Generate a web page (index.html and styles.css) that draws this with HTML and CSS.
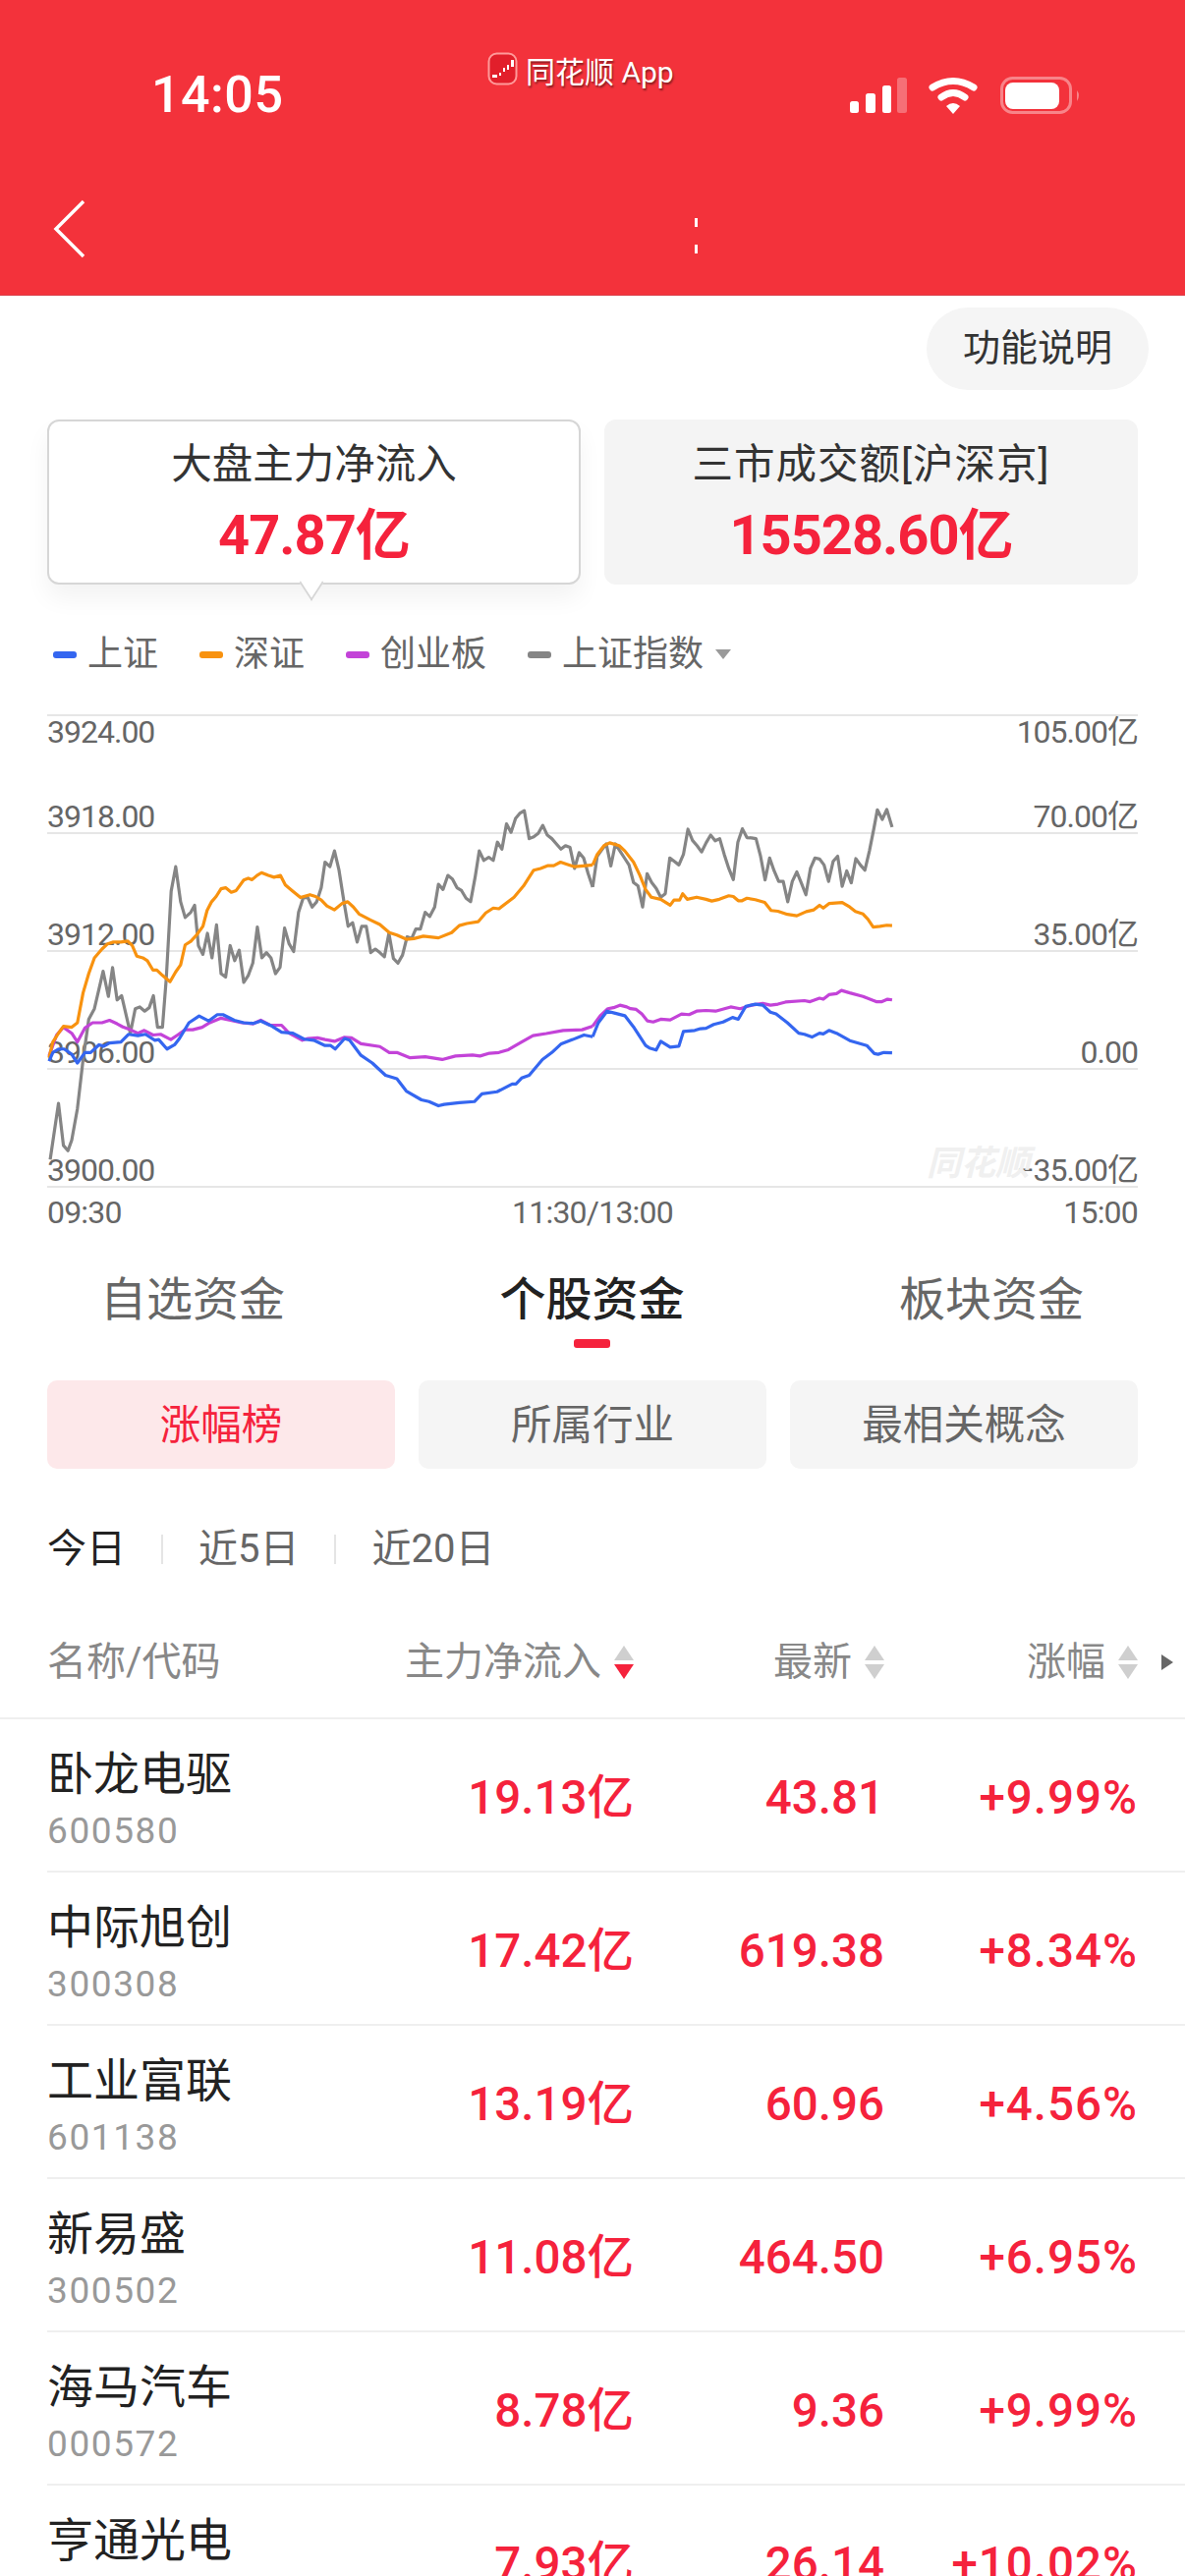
FILE: index.html
```html
<!DOCTYPE html>
<html lang="zh-CN">
<head>
    <meta charset="UTF-8">
    <meta name="viewport" content="width=device-width, initial-scale=1.0">
    <title>资金流向</title>
    <link rel="stylesheet" href="styles.css">
</head>
<body>
<div class="page">
    <header class="app-header">
        <div class="status-bar">
            <span class="status-time">14:05</span>
            <div class="status-app">
                <svg class="app-logo" viewBox="0 0 31 34">
                    <rect x="1.5" y="1.5" width="28" height="31" rx="8" fill="#e21f2b" stroke="#ff9a9a" stroke-width="2"/>
                    <path d="M5 23h5v3H5zM12 21h2v3h-2zM16 16h2v4h-2zM20 13h2v5h-2zM24 8h3v7h-3z" fill="#fff"/>
                </svg>
                <span class="app-name">同花顺 App</span>
            </div>
            <svg class="status-icons" viewBox="0 0 235 40">
                <rect x="0" y="25" width="9" height="12" rx="2.5" fill="#fff"/>
                <rect x="16" y="17" width="10" height="20" rx="2.5" fill="#fff"/>
                <rect x="33" y="9" width="9" height="28" rx="2.5" fill="#fff"/>
                <rect x="48" y="1" width="10" height="36" rx="2.5" fill="#fff" fill-opacity="0.3"/>
                <path d="M84 11Q105 -2 126 11" fill="none" stroke="#fff" stroke-width="7" stroke-linecap="round"/>
                <path d="M93 21Q105 12 117 21" fill="none" stroke="#fff" stroke-width="7" stroke-linecap="round"/>
                <path d="M98 30Q105 24 112 30L105 38Z" fill="#fff"/>
                <rect x="154.5" y="1.5" width="70" height="35" rx="11" fill="none" stroke="#fff" stroke-opacity="0.4" stroke-width="3"/>
                <rect x="158" y="6" width="55" height="27" rx="8" fill="#fff"/>
                <path d="M231 14Q235 19 231 25Z" fill="#fff" fill-opacity="0.4"/>
            </svg>
        </div>
        <div class="nav-bar">
            <svg class="nav-back" viewBox="0 0 34 60">
                <path d="M32 2L4 30L32 58" fill="none" stroke="#fff" stroke-width="3.5"/>
            </svg>
            <div class="nav-marks"><i></i><i></i></div>
        </div>
    </header>

    <div class="top-action">
        <span class="help-btn">功能说明</span>
    </div>

    <section class="summary">
        <div class="summary-card summary-card-active">
            <div class="summary-title">大盘主力净流入</div>
            <div class="summary-value">47.87亿</div>
        </div>
        <div class="summary-card">
            <div class="summary-title summary-title-wide">三市成交额[沪深京]</div>
            <div class="summary-value">15528.60亿</div>
        </div>
    </section>

    <div class="legend">
        <span class="legend-item"><i class="dash dash-blue"></i>上证</span>
        <span class="legend-item"><i class="dash dash-orange"></i>深证</span>
        <span class="legend-item"><i class="dash dash-purple"></i>创业板</span>
        <span class="legend-item"><i class="dash dash-gray"></i>上证指数<i class="caret"></i></span>
    </div>

    <section class="chart">
        <div class="axis-row axis-row-top"><span>3924.00</span><span>105.00亿</span></div>
        <div class="axis-row axis-row-first"><span>3918.00</span><span>70.00亿</span></div>
        <div class="axis-row"><span>3912.00</span><span>35.00亿</span></div>
        <div class="axis-row"><span>3906.00</span><span>0.00</span></div>
        <div class="axis-row"><span>3900.00</span><span>−35.00亿</span></div>
        <span class="watermark">同花顺</span>
        <svg class="chart-lines" viewBox="125 78 2885 1345" preserveAspectRatio="none">
            <g>
                <polyline class="line-gray" points="133,1345 155,1185 168,1305 180,1320 190,1290 205,1200 220,1060 235,945 250,915 273,808 287,880 298,798 310,890 322,878 345,985 358,915 370,910 383,922 395,912 406,878 417,968 430,968 440,830 453,580 465,510 478,610 490,655 505,640 515,620 525,735 537,760 549,700 561,770 573,676 585,815 597,825 609,735 621,778 633,748 645,840 657,820 669,785 681,682 693,770 705,755 717,770 729,815 741,797 753,685 765,730 777,752 790,640 802,600 814,597 826,625 838,610 850,570 860,497 873,510 885,465 897,520 910,610 921,680 933,670 945,725 957,680 969,680 981,755 993,745 1005,755 1017,767 1029,700 1041,772 1053,785 1065,762 1077,710 1089,715 1100,688 1112,688 1125,640 1137,652 1150,625 1160,560 1172,575 1185,535 1197,545 1209,570 1221,578 1233,600 1245,610 1257,540 1268,465 1280,492 1293,483 1305,492 1316,440 1328,460 1340,388 1352,412 1364,372 1375,358 1387,350 1400,430 1412,425 1424,415 1436,392 1448,420 1460,430 1472,445 1484,460 1496,450 1508,455 1520,515 1532,470 1544,485 1556,530 1568,568"/>
                <polyline class="line-purple" points="130,1050 150,990 168,968 190,985 205,1010 225,970 245,955 270,955 290,948 310,958 325,967 345,975 365,985 382,977 405,990 425,988 452,1003 470,990 490,975 510,975 535,968 555,955 585,942 610,948 640,955 670,958 690,948 715,962 745,962 765,985 800,1005 815,1000 840,998 860,1003 885,1008 910,997 930,998 955,1015 1005,1023 1030,1040 1050,1040 1085,1055 1125,1052 1170,1060 1205,1050 1250,1047 1270,1050 1295,1042 1320,1040 1345,1032 1380,1010 1410,992 1445,986 1490,977 1540,975 1568,965"/>
                <polyline class="line-orange" points="130,1055 140,1010 155,985 168,965 190,968 205,955 220,870 235,815 250,770 270,745 285,730 300,725 320,725 338,722 350,735 362,765 378,770 390,778 405,805 415,805 430,820 450,838 465,810 478,790 490,733 505,723 520,705 537,680 548,635 560,610 572,595 585,573 597,570 612,583 625,578 645,548 657,543 667,547 680,535 692,527 710,535 725,540 742,535 755,562 775,580 795,598 820,590 835,595 850,605 865,622 885,633 905,615 920,610 935,625 950,645 980,662 1005,675 1030,698 1050,705 1075,717 1095,715 1120,708 1160,713 1195,698 1215,678 1235,672 1265,667 1285,642 1305,628 1320,630 1360,597 1385,565 1412,520 1430,515 1450,507 1465,507 1483,497 1500,503 1520,510 1550,507 1568,505"/>
                <polyline class="line-blue" points="130,1065 140,1040 155,1030 170,1030 190,1045 205,1070 225,1040 240,1040 262,1018 275,1022 290,1013 320,1010 340,988 365,992 385,988 410,1005 420,1003 442,1030 462,1018 475,1000 500,955 527,936 552,950 575,932 590,932 620,948 645,955 670,957 690,950 720,965 745,982 775,985 805,1002 830,1005 860,1020 875,1020 887,1030 912,1000 925,1005 955,1048 985,1070 1020,1105 1050,1115 1075,1150 1115,1175 1135,1180 1160,1192 1175,1188 1215,1183 1255,1180 1275,1158 1315,1152 1355,1130 1365,1130 1380,1113 1400,1105 1435,1060 1460,1040 1485,1015 1515,1003 1545,990 1568,995"/>
            </g>
            <g transform="translate(1568 0)">
                <polyline class="line-gray" points="0,568 12,480 24,462 36,445 48,508 60,445 72,465 84,485 96,505 108,555 120,565 132,625 144,530 156,555 168,572 180,597 192,587 204,485 216,495 228,505 240,475 252,403 264,435 276,450 288,468 300,442 312,420 324,436 336,430 348,475 360,515 372,547 384,440 396,402 408,427 420,428 432,430 444,480 456,548 468,485 480,522 492,552 504,552 516,610 528,552 540,525 552,557 564,590 576,515 588,485 600,488 612,505 624,552 636,495 648,480 660,566 672,522 684,556 696,487 708,505 720,520 732,465 744,400 753,348 766,375 778,347 792,397"/>
                <polyline class="line-purple" points="0,965 20,935 40,915 55,912 72,905 90,910 100,915 115,917 130,930 145,950 160,953 180,945 205,947 235,930 255,932 275,922 300,920 325,922 365,910 390,915 420,905 450,900 470,905 490,902 510,896 560,892 575,895 600,885 610,888 625,875 645,872 658,863 680,870 715,880 750,895 765,895 780,888 792,890"/>
                <polyline class="line-orange" points="0,505 12,475 30,450 45,442 70,450 85,465 108,497 125,535 140,575 155,597 180,603 205,620 215,605 230,605 238,587 250,603 275,597 300,603 315,608 335,603 360,593 372,595 385,607 395,607 408,600 430,604 455,612 472,635 490,637 515,646 540,650 565,638 585,633 600,620 610,628 625,615 660,612 680,625 695,638 715,645 728,660 742,682 760,680 778,677 792,678"/>
                <polyline class="line-blue" points="0,995 15,955 38,922 60,928 85,935 110,970 140,1020 150,1027 168,1033 180,1008 205,1025 228,1022 240,980 270,977 285,972 300,971 320,960 345,953 370,940 385,945 405,908 430,902 450,905 470,925 485,930 515,955 545,985 560,988 580,996 600,985 610,987 625,977 645,985 680,1006 725,1020 745,1043 755,1045 770,1040 792,1041"/>
            </g>
        </svg>
    </section>
    <div class="time-axis"><span>09:30</span><span>11:30/13:00</span><span>15:00</span></div>

    <nav class="tabs">
        <span class="tab">自选资金</span>
        <span class="tab tab-active">个股资金</span>
        <span class="tab">板块资金</span>
    </nav>

    <div class="sub-tabs">
        <span class="sub-tab sub-tab-active">涨幅榜</span>
        <span class="sub-tab">所属行业</span>
        <span class="sub-tab">最相关概念</span>
    </div>

    <div class="period">
        <span class="period-item period-active">今日</span>
        <i class="period-sep"></i>
        <span class="period-item">近5日</span>
        <i class="period-sep"></i>
        <span class="period-item">近20日</span>
    </div>

    <div class="table-head">
        <span>名称/代码</span>
        <span class="head-cell">主力净流入<i class="sort sort-desc"></i></span>
        <span class="head-cell">最新<i class="sort"></i></span>
        <span class="head-cell">涨幅<i class="sort"></i></span>
        <i class="more"></i>
    </div>

    <div class="stock-row">
        <div class="stock-name">卧龙电驱<small>600580</small></div>
        <span class="stock-num">19.13亿</span><span class="stock-num">43.81</span><span class="stock-num">+9.99%</span>
    </div>
    <div class="stock-row">
        <div class="stock-name">中际旭创<small>300308</small></div>
        <span class="stock-num">17.42亿</span><span class="stock-num">619.38</span><span class="stock-num">+8.34%</span>
    </div>
    <div class="stock-row">
        <div class="stock-name">工业富联<small>601138</small></div>
        <span class="stock-num">13.19亿</span><span class="stock-num">60.96</span><span class="stock-num">+4.56%</span>
    </div>
    <div class="stock-row">
        <div class="stock-name">新易盛<small>300502</small></div>
        <span class="stock-num">11.08亿</span><span class="stock-num">464.50</span><span class="stock-num">+6.95%</span>
    </div>
    <div class="stock-row">
        <div class="stock-name">海马汽车<small>000572</small></div>
        <span class="stock-num">8.78亿</span><span class="stock-num">9.36</span><span class="stock-num">+9.99%</span>
    </div>
    <div class="stock-row">
        <div class="stock-name">亨通光电<small>600487</small></div>
        <span class="stock-num">7.93亿</span><span class="stock-num">26.14</span><span class="stock-num">+10.02%</span>
    </div>
</div>
</body>
</html>
```

FILE: styles.css
```css
* {
    box-sizing: border-box;
}

body {
    margin: 0;
    background-color: #fff;
    font-family: Roboto, "Noto Sans CJK SC", sans-serif;
    color: #333;
}

.page {
    width: 1206px;
    height: 2622px;
    overflow: hidden;
    background-color: #fff;
}

/* header */
.app-header {
    height: 301px;
    background-color: #f3323b;
    border-bottom: 1px solid #d9404a;
}

.status-bar {
    display: flex;
    height: 170px;
    color: #fff;
}

.status-time {
    margin: 67px 0 0 154px;
    width: 134px;
    font-size: 52px;
    line-height: 60px;
    font-weight: 500;
    letter-spacing: 0.5px;
}

.status-app {
    display: flex;
    align-items: flex-start;
    margin: 53px 0 0 208px;
    width: 369px;
}

.app-logo {
    width: 31px;
    height: 34px;
}

.app-name {
    margin: 2px 0 0 8px;
    font-size: 30px;
    line-height: 38px;
    text-shadow: 1px 2px 2px rgba(0, 0, 0, 0.45);
}

.status-icons {
    margin-top: 78px;
    width: 235px;
    height: 40px;
}

.nav-bar {
    display: flex;
    padding: 33px 0 0 53px;
}

.nav-back {
    width: 34px;
    height: 60px;
}

.nav-marks {
    display: flex;
    flex-direction: column;
    justify-content: space-between;
    margin: 19px 0 0 620px;
    height: 36px;
}

.nav-marks i {
    display: block;
    width: 3px;
    height: 9px;
    background-color: #fff;
}

/* help button and summary cards */
.top-action {
    display: flex;
    justify-content: flex-end;
    padding: 12px 37px 0 0;
}

.help-btn {
    width: 226px;
    height: 84px;
    line-height: 82px;
    text-align: center;
    border-radius: 42px;
    background-color: #f5f5f5;
    font-size: 38px;
}

.summary {
    display: grid;
    grid-template-columns: 1fr 1fr;
    gap: 24px;
    margin-top: 30px;
    padding: 0 48px;
}

.summary-card {
    position: relative;
    height: 168px;
    padding-top: 21px;
    border-radius: 12px;
    background-color: #f4f4f4;
    text-align: center;
}

.summary-card-active {
    background-color: #fff;
    border: 2px solid #d6d6d6;
    padding-top: 19px;
    box-shadow: 0 14px 24px rgba(0, 0, 0, 0.05);
}

.summary-card-active::after {
    content: "";
    position: absolute;
    left: 256px;
    bottom: -11px;
    width: 20px;
    height: 20px;
    background-color: #fff;
    border-right: 2px solid #d6d6d6;
    border-bottom: 2px solid #d6d6d6;
    transform: rotate(45deg) skew(12deg, 12deg);
}

.summary-title {
    font-size: 41.5px;
    line-height: 50px;
}

.summary-title-wide {
    letter-spacing: 1px;
}

.summary-value {
    margin-top: 12px;
    font-size: 56px;
    line-height: 70px;
    font-weight: 700;
    color: #f5223c;
    letter-spacing: -1px;
}

/* legend */
.legend {
    display: flex;
    gap: 42px;
    margin-top: 49px;
    padding-left: 54px;
    height: 44px;
    align-items: center;
    font-size: 36px;
    line-height: 46px;
    color: #666;
}

.legend-item {
    display: flex;
    align-items: center;
}

.dash {
    width: 24px;
    height: 7px;
    margin-right: 11px;
    border-radius: 3px;
}

.dash-blue {
    background-color: #3466f0;
}

.dash-orange {
    background-color: #f8920f;
}

.dash-purple {
    background-color: #c343d8;
}

.dash-gray {
    background-color: #858585;
}

.caret {
    margin-left: 12px;
    border-left: 8px solid transparent;
    border-right: 8px solid transparent;
    border-top: 10px solid #9a9a9a;
}

/* chart */
.chart {
    position: relative;
    margin: 39px 48px 0;
    width: 1110px;
}

.axis-row {
    display: flex;
    justify-content: space-between;
    align-items: flex-end;
    height: 120px;
    border-bottom: 2px solid #e6e6e6;
    font-size: 32px;
    line-height: 32px;
    letter-spacing: -1px;
    color: #666;
}

.axis-row-top {
    height: 42px;
    align-items: flex-start;
    border-bottom: none;
    border-top: 2px solid #e6e6e6;
}

.axis-row-first {
    height: 80px;
}

.watermark {
    position: absolute;
    left: 895px;
    top: 438px;
    font-size: 35px;
    line-height: 40px;
    font-weight: 700;
    font-style: italic;
    color: #f0f0f0;
}

.chart-lines {
    position: absolute;
    left: 0;
    top: 1px;
    width: 1110px;
    height: 480px;
}

.chart-lines polyline {
    fill: none;
    stroke-width: 3.2;
    stroke-linejoin: round;
    vector-effect: non-scaling-stroke;
}

.line-gray {
    stroke: #858585;
}

.line-purple {
    stroke: #c343d8;
}

.line-orange {
    stroke: #f8920f;
}

.line-blue {
    stroke: #3466f0;
}

.time-axis {
    display: flex;
    justify-content: space-between;
    margin: 7px 48px 0;
    font-size: 32px;
    line-height: 36px;
    letter-spacing: -0.8px;
    color: #666;
}

/* tabs */
.tabs {
    display: flex;
    justify-content: space-between;
    margin-top: 41px;
    padding: 0 103px 0 102px;
}

.tab {
    font-size: 47px;
    line-height: 60px;
    color: #666;
}

.tab::after {
    content: "";
    display: block;
    width: 37px;
    height: 9px;
    margin: 10px auto 0;
    border-radius: 3px;
}

.tab-active {
    color: #222;
    font-weight: 500;
}

.tab-active::after {
    background-color: #f5223c;
}

.sub-tabs {
    display: grid;
    grid-template-columns: repeat(3, 1fr);
    gap: 24px;
    margin-top: 33px;
    padding: 0 48px;
}

.sub-tab {
    height: 90px;
    line-height: 92px;
    text-align: center;
    border-radius: 10px;
    background-color: #f5f5f5;
    font-size: 41.5px;
    color: #666;
}

.sub-tab-active {
    background-color: #fde8ea;
    color: #f5223c;
}

.period {
    display: flex;
    align-items: center;
    gap: 36px;
    margin-top: 57px;
    padding-left: 48px;
    height: 50px;
    line-height: 50px;
}

.period-item {
    font-size: 40px;
    color: #666;
}

.period-active {
    color: #222;
}

.period-sep {
    width: 2px;
    height: 30px;
    background-color: #e5e5e5;
}

/* table */
.table-head {
    display: grid;
    grid-template-columns: 1fr 258px 255px 258px 36px;
    align-items: center;
    margin-top: 65px;
    padding: 0 12px 31px 48px;
    border-bottom: 2px solid #efefef;
    font-size: 40px;
    line-height: 50px;
    color: #888;
}

.head-cell {
    display: flex;
    justify-content: flex-end;
    align-items: center;
    gap: 13px;
}

.sort {
    display: flex;
    flex-direction: column;
    gap: 4px;
}

.sort::before,
.sort::after {
    content: "";
    border-left: 10px solid transparent;
    border-right: 10px solid transparent;
}

.sort::before {
    border-bottom: 15px solid #cfcfcf;
}

.sort::after {
    border-top: 15px solid #cfcfcf;
}

.sort-desc::after {
    border-top-color: #f5223c;
}

.more {
    justify-self: end;
    border-top: 8px solid transparent;
    border-bottom: 8px solid transparent;
    border-left: 12px solid #666;
}

.stock-row {
    display: grid;
    grid-template-columns: 1fr 258px 255px 258px;
    align-items: center;
    height: 156px;
    margin-left: 48px;
    padding-right: 48px;
    border-bottom: 2px solid #efefef;
}

.stock-name {
    align-self: start;
    padding-top: 28px;
    font-size: 47px;
    line-height: 56px;
    color: #222;
}

.stock-name small {
    display: block;
    margin-top: 8px;
    font-size: 37px;
    line-height: 44px;
    letter-spacing: 1.6px;
    color: #999;
}

.stock-num {
    padding-top: 6px;
    text-align: right;
    font-size: 47.5px;
    line-height: 60px;
    font-weight: 500;
    color: #f5223c;
}

.stock-num:nth-child(4) {
    letter-spacing: 1px;
}
```
